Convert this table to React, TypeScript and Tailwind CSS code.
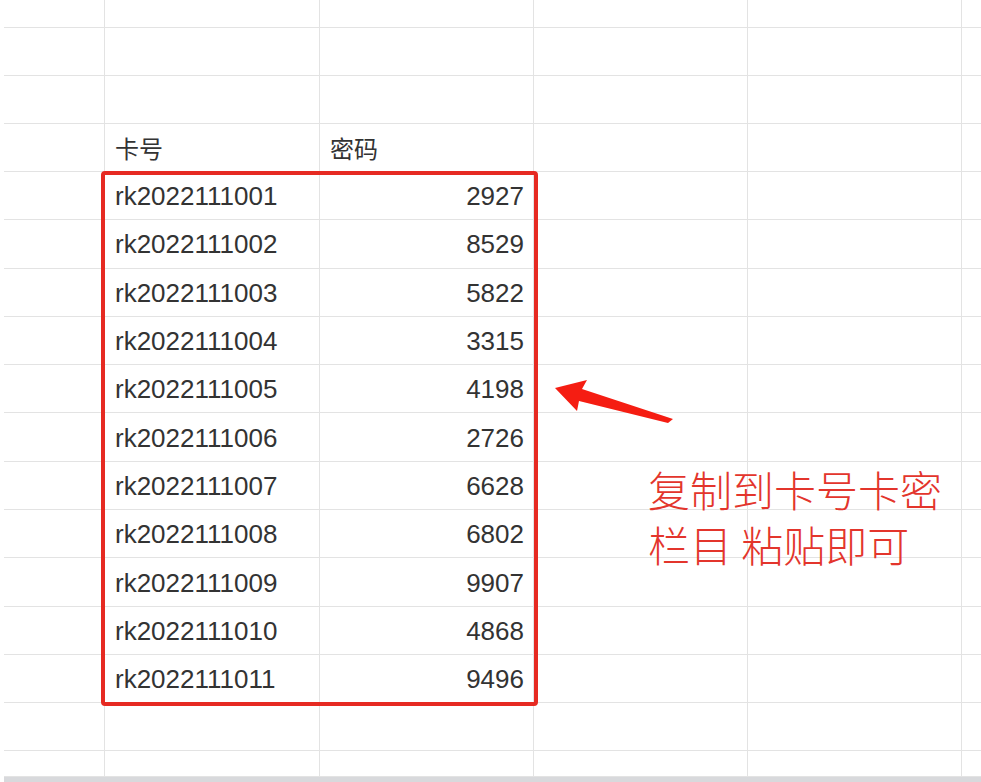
const cards: [string, string][] = [
  ["rk2022111001", "2927"],
  ["rk2022111002", "8529"],
  ["rk2022111003", "5822"],
  ["rk2022111004", "3315"],
  ["rk2022111005", "4198"],
  ["rk2022111006", "2726"],
  ["rk2022111007", "6628"],
  ["rk2022111008", "6802"],
  ["rk2022111009", "9907"],
  ["rk2022111010", "4868"],
  ["rk2022111011", "9496"],
];

type Row = { b?: string; c?: string; header?: boolean; h: string };

const rows: Row[] = [
  { h: "h-[28px]" },
  { h: "h-[48px]" },
  { h: "h-[48px]" },
  { b: "卡号", c: "密码", header: true, h: "h-[48px]" },
  ...cards.map(([b, c]) => ({ b, c, h: "h-[48.3px]" })),
  { h: "h-[48px]" },
  { h: "h-[26px]" },
];

const cell = "flex items-center border-r border-b border-[#e3e3e3]";

const App = (): JSX.Element => {
  return (
    <div className="relative h-[782px] w-[981px] overflow-hidden bg-white font-['Liberation_Sans','Noto_Sans_CJK_SC',sans-serif] text-[#333333]">
      <div className="flex flex-col pl-[4px]">
        {rows.map((r, i) => (
          <div
            key={i}
            className={`grid grid-cols-[101px_215px_214px_214px_214px_1fr] ${r.h}`}
          >
            <div className={cell} />
            <div className={`${cell} pl-[10px] ${r.header ? "pt-[4px] text-[24px]" : "pt-[2px] text-[26px]"}`}>
              {r.b}
            </div>
            <div
              className={`${cell} ${
                r.header
                  ? "justify-start pl-[10px] pt-[4px] text-[24px]"
                  : "justify-end pr-[9px] pt-[2px] text-[26px]"
              }`}
            >
              {r.c}
            </div>
            <div className={cell} />
            <div className={cell} />
            <div className="border-b border-[#e3e3e3]" />
          </div>
        ))}
        <div className="h-[5px] bg-[#d8d9dc]" />
      </div>

      {/* selection frame */}
      <div className="absolute left-[101px] top-[171px] h-[535px] w-[437px] rounded-[4px] border-[4px] border-[#e62a22]" />

      {/* arrow */}
      <svg className="absolute left-0 top-0" width="981" height="782" aria-hidden="true">
        <polygon
          points="555,388 587,380 582,389 673,419 668,423 579,401 577,411"
          fill="#f51d12"
        />
      </svg>

      <div className="absolute left-[648px] top-[461px] font-['Noto_Sans_CJK_SC',sans-serif] text-[42px] font-light leading-[55px] text-[#e3352c]">
        <div>复制到卡号卡密</div>
        <div>栏目 粘贴即可</div>
      </div>
    </div>
  );
};

export default App;
